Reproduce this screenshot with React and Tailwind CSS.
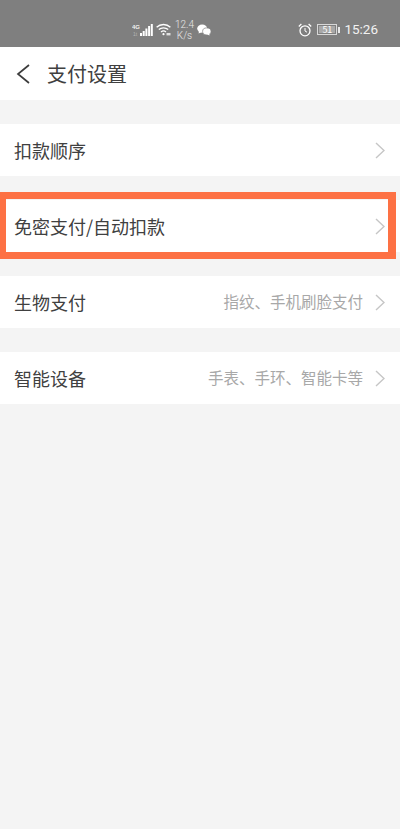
const font = { fontFamily: '"Noto Sans CJK SC", "Liberation Sans", sans-serif' }

const SignalIcon = () => (
  <svg width="21" height="14" viewBox="0 0 21 14" fill="none">
    <text x="0" y="6" fill="#f0f0f0" fontSize="6" fontWeight="700" fontFamily="Liberation Sans, sans-serif">4G</text>
    <text x="1" y="13" fill="#b5b5b5" fontSize="5" fontFamily="Liberation Sans, sans-serif">1t</text>
    <rect x="8" y="10" width="2" height="3" fill="#fff" />
    <rect x="10.7" y="8" width="2" height="5" fill="#fff" />
    <rect x="13.4" y="5.5" width="2" height="7.5" fill="#fff" />
    <rect x="16.1" y="3" width="2" height="10" fill="#fff" />
    <rect x="18.8" y="1" width="2" height="12" fill="#fff" />
  </svg>
)

const WifiIcon = () => (
  <svg width="15" height="13" viewBox="0 0 15 13" fill="none" stroke="#fff" strokeWidth="1.3">
    <path d="M0.6 4.2 C4.4 0.6 10.6 0.6 14.4 4.2" />
    <path d="M2.8 6.6 C5.4 4.2 9.6 4.2 12.2 6.6" />
    <path d="M5 8.9 C6.4 7.8 8.6 7.8 10 8.9" />
    <circle cx="7.5" cy="11.2" r="1.1" fill="#fff" stroke="none" />
    <rect x="10.5" y="10" width="4" height="2.4" fill="#e0e0e0" stroke="none" />
  </svg>
)

const WechatIcon = () => (
  <svg width="14" height="12" viewBox="0 0 14 12" fill="#fff">
    <ellipse cx="5.2" cy="4.6" rx="5" ry="4.2" />
    <path d="M2 7 L1.6 9.6 L4.4 8.2 Z" />
    <ellipse cx="9.8" cy="7.4" rx="4.2" ry="3.5" stroke="#7f7f7f" strokeWidth="0.7" />
    <path d="M12 9.6 L12.6 11.6 L10 10.4 Z" />
  </svg>
)

const AlarmIcon = () => (
  <svg width="14" height="14" viewBox="0 0 14 14" fill="none" stroke="#fff" strokeWidth="1.3">
    <circle cx="7" cy="7.8" r="5" />
    <path d="M7 5 V8 L9 9.2" strokeWidth="1" />
    <path d="M0.8 3.4 L3.4 1" />
    <path d="M13.2 3.4 L10.6 1" />
  </svg>
)

const Battery = () => (
  <div className="flex items-center gap-[1px]">
    <div className="w-[20px] h-[11px] border border-[#d8d8d8] p-[1px] flex">
      <div className="flex-1 bg-[#a8a8a8] flex items-center justify-center text-[9px] leading-none text-white">51</div>
    </div>
    <div className="w-[2px] h-[6px] bg-[#e8e8e8]" />
  </div>
)

const Chevron = ({ className }) => (
  <svg className={className} width="10" height="17" viewBox="0 0 10 17" fill="none" stroke="#c6c6c6" strokeWidth="1.4">
    <path d="M1 1 L9 8.5 L1 16" />
  </svg>
)

const rows = [
  { label: '扣款顺序', hint: '' },
  { label: '免密支付/自动扣款', hint: '' },
  { label: '生物支付', hint: '指纹、手机刷脸支付' },
  { label: '智能设备', hint: '手表、手环、智能卡等' },
]

export default function App() {
  return (
    <div className="relative w-[400px] h-[829px] bg-[#f4f4f4] overflow-hidden" style={font}>
      <div className="h-[47px] bg-[#7f7f7f] flex items-center pt-[12px] text-white">
        <div className="ml-[132px] flex items-center">
          <SignalIcon />
          <div className="ml-[3px]"><WifiIcon /></div>
          <div className="ml-[5px] w-[17px] flex flex-col items-center text-[10px] font-light leading-[11px] text-[#e8e8e8]" style={{ fontFamily: 'Roboto, sans-serif' }}>
            <span>12.4</span>
            <span>K/s</span>
          </div>
          <div className="ml-[4px]"><WechatIcon /></div>
        </div>
        <div className="ml-auto mr-[22px] flex items-center">
          <AlarmIcon />
          <div className="ml-[5px]"><Battery /></div>
          <span className="ml-[4px] text-[13.5px] text-[#f2f2f2]" style={{ fontFamily: 'Roboto, sans-serif' }}>15:26</span>
        </div>
      </div>

      <div className="h-[53px] bg-white flex items-center">
        <svg className="ml-[16px]" width="14" height="20" viewBox="0 0 14 20" fill="none" stroke="#3c3c3c" strokeWidth="1.7">
          <path d="M13 1 L2 10 L13 19" />
        </svg>
        <span className="ml-[17px] text-[20px] leading-none text-[#404040]">支付设置</span>
      </div>

      <div className="pt-[24px] flex flex-col gap-[24px]">
        {rows.map((row) => (
          <div key={row.label} className="h-[52px] bg-white flex items-center pl-[14px] pr-[15px]">
            <span className="text-[18px] leading-none text-[#404040]">{row.label}</span>
            {row.hint && <span className="ml-auto text-[15.5px] leading-none text-[#a8a8a8]">{row.hint}</span>}
            <Chevron className={row.hint ? 'ml-[12px]' : 'ml-auto'} />
          </div>
        ))}
      </div>

      <div className="absolute left-0 top-[192px] w-[396px] h-[67px] border-y-[7px] border-l-[6px] border-r-[8px] border-[#fd7144]" />
    </div>
  )
}
